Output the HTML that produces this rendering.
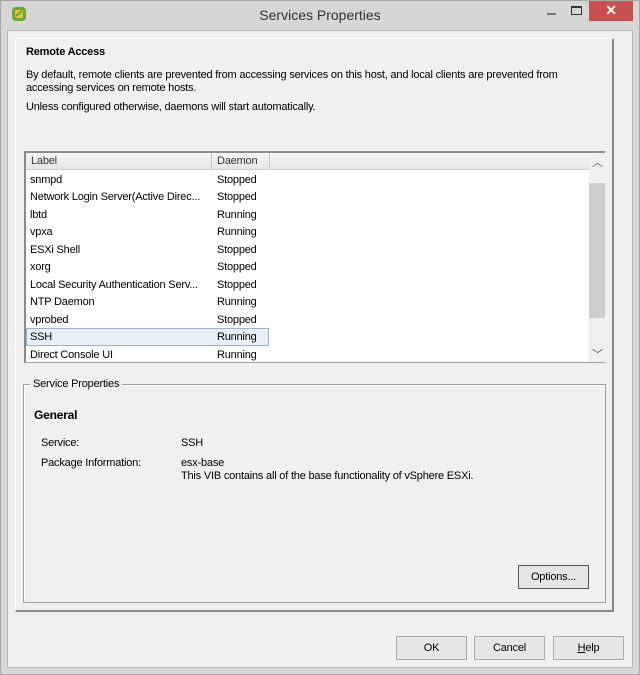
<!DOCTYPE html>
<html><head><style>
*{margin:0;padding:0;box-sizing:border-box}
body{width:640px;height:675px;background:#d6d6d6;font-family:"Liberation Sans",sans-serif;font-size:11px;letter-spacing:-0.2px;color:#000;position:relative;overflow:hidden}
.a{position:absolute}
.frame{left:0;top:0;width:640px;height:675px;border:1px solid #a8a8a8}
.client{left:7px;top:30px;width:626px;height:638px;background:#f0f0f0;border:1px solid #b8b8b8}
.panel{left:15px;top:38px;width:599px;height:574px;border-top:1px solid #fff;border-left:1px solid #fff;border-right:2px solid #8a8a8a;border-bottom:2px solid #8a8a8a}
.t{white-space:nowrap}
.table{left:24px;top:151px;width:581px;height:212px;background:#fff;border:1px solid #a0a0a0;border-top:2px solid #8a8a8a;border-left:2px solid #8a8a8a}
.hdr{left:0;top:0;width:563px;height:17px;background:linear-gradient(#f6f6f6,#e6e6e6);border-bottom:1px solid #d0d0d0}
.row{left:4px;height:17px;line-height:17px}
.btn{background:#e6e6e6;border:1px solid #adadad;text-align:center;line-height:22px;height:24px}
.grp{left:23px;top:384px;width:583px;height:219px;border:1px solid #a0a0a0;box-shadow:1px 1px 0 #fff inset}
</style></head><body>
<div class="a frame"></div>
<svg class="a" style="left:10px;top:5px" width="18" height="18" viewBox="0 0 18 18"><rect x="2" y="2" width="14" height="14" rx="4" fill="#6aa836"/><rect x="5" y="5" width="8" height="8" rx="2" fill="#f0c040"/><path d="M6 11 L12 6" stroke="#6aa836" stroke-width="2"/></svg>
<div class="a t" style="left:0;width:640px;top:7px;text-align:center;font-size:14px;letter-spacing:0;color:#333">Services Properties</div>
<div class="a" style="left:547px;top:13px;width:9px;height:2px;background:#777"></div>
<div class="a" style="left:571px;top:6px;width:11px;height:9px;border:1px solid #333;border-top:2px solid #333"></div>
<div class="a" style="left:589px;top:1px;width:44px;height:20px;background:#c75050;color:#fff;text-align:center;font-size:14px;line-height:19px;font-weight:bold">✕</div>
<div class="a client"></div>
<div class="a panel"></div>
<div class="a t" style="left:26px;top:46px;font-weight:bold">Remote Access</div>
<div class="a" style="left:26px;top:69px;width:545px;line-height:13px">By default, remote clients are prevented from accessing services on this host, and local clients are prevented from accessing services on remote hosts.</div>
<div class="a t" style="left:26px;top:101px">Unless configured otherwise, daemons will start automatically.</div>
<div class="a table">
 <div class="a hdr"></div>
 <div class="a t" style="left:5px;top:2px;color:#333">Label</div>
 <div class="a" style="left:185px;top:0;width:1px;height:17px;background:#c8c8c8"></div>
 <div class="a t" style="left:191px;top:2px;color:#333">Daemon</div>
 <div class="a" style="left:243px;top:0;width:1px;height:17px;background:#c8c8c8"></div>
 <div class="a" style="left:563px;top:0;width:16px;height:209px;background:#f0f0f0"></div>
 <div class="a" style="left:563px;top:30px;width:16px;height:135px;background:#cdcdcd"></div>
 <div class="a t" style="left:566px;top:1px;color:#555;font-size:11px">︿</div>
 <div class="a t" style="left:566px;top:193px;color:#555;font-size:11px">﹀</div>
 <div class="a" style="left:0;top:175px;width:243px;height:18px;background:#e8eff8;border:1px solid #99b4d1"></div>
 <div class="a row" style="top:19px">snmpd</div><div class="a row" style="left:191px;top:19px">Stopped</div>
 <div class="a row" style="top:36px">Network Login Server(Active Direc...</div><div class="a row" style="left:191px;top:36px">Stopped</div>
 <div class="a row" style="top:54px">lbtd</div><div class="a row" style="left:191px;top:54px">Running</div>
 <div class="a row" style="top:71px">vpxa</div><div class="a row" style="left:191px;top:71px">Running</div>
 <div class="a row" style="top:89px">ESXi Shell</div><div class="a row" style="left:191px;top:89px">Stopped</div>
 <div class="a row" style="top:106px">xorg</div><div class="a row" style="left:191px;top:106px">Stopped</div>
 <div class="a row" style="top:124px">Local Security Authentication Serv...</div><div class="a row" style="left:191px;top:124px">Stopped</div>
 <div class="a row" style="top:141px">NTP Daemon</div><div class="a row" style="left:191px;top:141px">Running</div>
 <div class="a row" style="top:159px">vprobed</div><div class="a row" style="left:191px;top:159px">Stopped</div>
 <div class="a row" style="top:176px">SSH</div><div class="a row" style="left:191px;top:176px">Running</div>
 <div class="a row" style="top:194px">Direct Console UI</div><div class="a row" style="left:191px;top:194px">Running</div>
</div>
<div class="a grp"></div>
<div class="a t" style="left:30px;top:378px;background:#f0f0f0;padding:0 3px">Service Properties</div>
<div class="a t" style="left:34px;top:408px;font-weight:bold;font-size:12px">General</div>
<div class="a t" style="left:41px;top:437px">Service:</div>
<div class="a t" style="left:181px;top:437px">SSH</div>
<div class="a t" style="left:41px;top:457px">Package Information:</div>
<div class="a t" style="left:181px;top:457px">esx-base</div>
<div class="a t" style="left:181px;top:470px">This VIB contains all of the base functionality of vSphere ESXi.</div>
<div class="a btn" style="left:518px;top:565px;width:71px;border:1px solid #555">Options...</div>
<div class="a btn" style="left:396px;top:636px;width:71px">OK</div>
<div class="a btn" style="left:474px;top:636px;width:71px">Cancel</div>
<div class="a btn" style="left:553px;top:636px;width:71px"><u>H</u>elp</div>
</body></html>
